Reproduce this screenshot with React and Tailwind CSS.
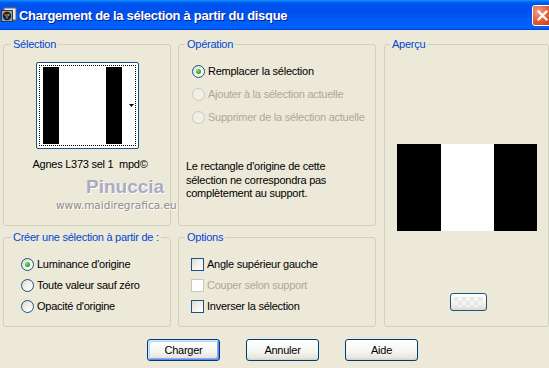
import React from "react";

const F = { fontFamily: '"Liberation Sans", Arial, sans-serif' };

function Radio({ checked, disabled }) {
  return (
    <span
      className={`relative flex h-[13px] w-[13px] shrink-0 items-center justify-center rounded-full border ${
        disabled
          ? "border-[#CAC8BB] bg-[#F0EFE8]"
          : "border-[#1C5180] bg-[linear-gradient(135deg,#DCD9CF_0%,#F4F3EE_55%,#FFFFFF_100%)]"
      }`}
    >
      {checked && (
        <span className="h-[5px] w-[5px] rounded-full bg-[radial-gradient(circle_at_35%_35%,#7BE27B,#21A121_70%)]" />
      )}
    </span>
  );
}

function Check({ disabled }) {
  return (
    <span
      className={`h-[13px] w-[13px] shrink-0 border ${
        disabled
          ? "border-[#CAC8BB] bg-[#FFFFFF]"
          : "border-[#1C5180] bg-[linear-gradient(135deg,#DCDCD5_0%,#F4F3EE_55%,#FFFFFF_100%)]"
      }`}
    />
  );
}

function Group({ label, lm, className, children }) {
  return (
    <fieldset className={`rounded-[3px] border border-[#D0D0BF] ${className}`}>
      <legend className={`${lm} px-[2px] text-[11px] leading-[13px] text-[#0046D5]`}>{label}</legend>
      {children}
    </fieldset>
  );
}

function Btn({ children, def }) {
  return (
    <button
      className={`flex h-[22px] w-[73px] items-center justify-center rounded-[3px] border border-[#003C74] bg-[linear-gradient(to_bottom,#FFFFFF_0%,#F4F4F0_60%,#E6E4DC_90%,#D6D0C5_100%)] text-[11px] text-black ${
        def ? "shadow-[inset_1px_1px_0_#CEE7FF,inset_-1px_-1px_0_#6982EE,inset_2px_2px_0_#BCD4F6,inset_-2px_-2px_0_#89ADE4]" : ""
      }`}
    >
      {children}
    </button>
  );
}

export default function App() {
  return (
    <div className="relative h-[368px] w-[549px] overflow-hidden bg-[#ECE9D8] tracking-[-0.25px]" style={F}>
      {/* Title bar */}
      <div className="flex h-[30px] items-center bg-[linear-gradient(to_bottom,#0997FF_0%,#0053EE_10%,#0050EE_40%,#0063FF_88%,#005BFF_94%,#003DD7_100%)]">
        <svg width="16" height="16" viewBox="0 0 16 16" className="ml-[1px]">
          <rect x="3" y="1" width="12" height="12" fill="#E8E8E8" stroke="#6A6A6A" />
          <rect x="0.5" y="3.5" width="11" height="11" fill="#9AA0A8" stroke="#3A3A3A" />
          <circle cx="6" cy="9" r="4.2" fill="#1A1A1A" />
          <circle cx="4.6" cy="8" r="1.3" fill="#E23B3B" />
          <circle cx="7.4" cy="8" r="1.3" fill="#3BBF3B" />
          <circle cx="6" cy="10.4" r="1.3" fill="#3B6BE2" />
        </svg>
        <span className="ml-[2px] text-[13px] font-bold leading-none tracking-[-0.3px] text-white [text-shadow:1px_1px_0_#0A1E86]">
          Chargement de la sélection à partir du disque
        </span>
        <div className="ml-auto mr-[-4px] flex h-[21px] w-[21px] items-center justify-center rounded-[3px] border border-white bg-[radial-gradient(circle_at_30%_30%,#F0A08A,#E1582E_55%,#C43C1A)]">
          <svg width="11" height="11" viewBox="0 0 11 11">
            <path d="M1.5 1.5 L9.5 9.5 M9.5 1.5 L1.5 9.5" stroke="white" strokeWidth="2.2" strokeLinecap="square" />
          </svg>
        </div>
      </div>

      {/* Groups */}
      <div className="flex pl-[3px] pt-[8px]">
        {/* Left column */}
        <div className="flex w-[168px] flex-col">
          <Group label="Sélection" lm="ml-[7px]" className="h-[188px]">
            <div className="flex flex-col items-center">
              <div className="mt-[11px] ml-[1px] flex h-[87px] w-[103px] rounded-[2px] border border-[#1C5180] bg-white p-[2px]">
                <div className="relative flex h-full w-full border border-dotted border-black py-[1px] pl-[3px]">
                  <div className="h-full w-[16px] bg-black" />
                  <div className="h-full w-[47px] bg-white" />
                  <div className="h-full w-[16px] bg-black" />
                  <div className="flex h-full flex-1 items-center justify-end pr-[1px]">
                    <svg width="5" height="3" viewBox="0 0 5 3">
                      <path d="M0 0 H5 L2.5 3 Z" fill="black" />
                    </svg>
                  </div>
                </div>
              </div>
              <div className="mt-[9px] ml-[6px] text-[11px] leading-[13px] text-black whitespace-pre">
                Agnes L373 sel 1  mpd©
              </div>
            </div>
          </Group>
          <Group label="Créer une sélection à partir de :" lm="ml-[7px]" className="mt-[5px] h-[96px]">
            <div className="mt-[10px] flex flex-col pl-[17px] text-[11px] text-black">
              {[
                ["Luminance d'origine", true],
                ["Toute valeur sauf zéro", false],
                ["Opacité d'origine", false],
              ].map(([t, c]) => (
                <div key={t} className="flex h-[21px] items-center gap-[3px]">
                  <Radio checked={c} />
                  <span>{t}</span>
                </div>
              ))}
            </div>
          </Group>
        </div>

        {/* Middle column */}
        <div className="ml-[7px] flex w-[198px] flex-col">
          <Group label="Opération" lm="ml-[6px]" className="h-[188px]">
            <div className="mt-[9px] flex flex-col pl-[13px] text-[11px]">
              <div className="flex h-[23px] items-center gap-[3px] text-black">
                <Radio checked />
                <span>Remplacer la sélection</span>
              </div>
              <div className="flex h-[23px] items-center gap-[3px] text-[#ACA899]">
                <Radio disabled />
                <span>Ajouter à la sélection actuelle</span>
              </div>
              <div className="flex h-[23px] items-center gap-[3px] text-[#ACA899]">
                <Radio disabled />
                <span>Supprimer de la sélection actuelle</span>
              </div>
            </div>
            <p className="mt-[31px] pl-[7px] pr-[6px] text-[11px] leading-[13.5px] text-black">
              Le rectangle d'origine de cette
              <br />
              sélection ne correspondra pas
              <br />
              complètement au support.
            </p>
          </Group>
          <Group label="Options" lm="ml-[6px]" className="mt-[5px] h-[96px]">
            <div className="mt-[10px] flex flex-col pl-[12px] text-[11px]">
              <div className="flex h-[21px] items-center gap-[3px] text-black">
                <Check />
                <span>Angle supérieur gauche</span>
              </div>
              <div className="flex h-[21px] items-center gap-[3px] text-[#ACA899]">
                <Check disabled />
                <span>Couper selon support</span>
              </div>
              <div className="flex h-[21px] items-center gap-[3px] text-black">
                <Check />
                <span>Inverser la sélection</span>
              </div>
            </div>
          </Group>
        </div>

        {/* Right column */}
        <Group label="Aperçu" lm="ml-[5px]" className="ml-[8px] h-[289px] w-[165px]">
          <div className="flex flex-col items-center">
            <div className="mt-[93px] ml-[1px] flex h-[87px] w-[140px]">
              <div className="h-full w-[44px] bg-black" />
              <div className="h-full w-[53px] bg-white" />
              <div className="h-full flex-1 bg-black" />
            </div>
            <div className="mt-[62px] ml-[3px] h-[18px] w-[37px] rounded-[3px] border border-[#1C5180] bg-[linear-gradient(to_bottom,#FFFFFF,#F2F2EE_60%,#DCDCD4)] p-[3px]">
              <div className="h-full w-full bg-[repeating-conic-gradient(#F4F4F4_0%_25%,#E4E4E4_0%_50%)] bg-[length:8px_8px] opacity-80" />
            </div>
          </div>
        </Group>
      </div>

      {/* Buttons */}
      <div className="mt-[12px] flex gap-[26px] pl-[147px]">
        <Btn def>Charger</Btn>
        <Btn>Annuler</Btn>
        <Btn>Aide</Btn>
      </div>

      {/* Watermark overlay */}
      <div
        className="absolute left-[86px] top-[175px] text-[19px] font-bold leading-[24px] tracking-[0px] text-[#A9ACC0] [text-shadow:1px_1px_0_#FFFFFF]"
        style={{ fontFamily: '"Liberation Sans", sans-serif' }}
      >
        Pinuccia
      </div>
      <div
        className="absolute left-[56px] top-[198px] text-[10.5px] leading-[14px] tracking-[0px] text-[#8C8C8C] [text-shadow:1px_1px_0_#FFFFFF]"
        style={{ fontFamily: '"DejaVu Sans", sans-serif' }}
      >
        www.maidiregrafica.eu
      </div>
    </div>
  );
}
